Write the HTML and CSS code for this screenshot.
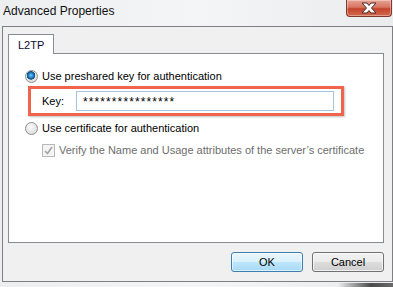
FILE: index.html
```html
<!DOCTYPE html>
<html lang="en">
<head>
  <meta charset="UTF-8">
  <title>Advanced Properties</title>
  <link rel="stylesheet" href="styles.css">
</head>
<body>
  <!-- Title bar -->
  <div class="titlebar">
    <span class="title">Advanced Properties</span>
    <button class="close-button" aria-label="Close">
      <svg width="20" height="12" viewBox="0 0 20 12">
        <path d="M3 1 L8 1 L10 3.5 L12 1 L17 1 L12.5 6 L17 11 L12 11 L10 8.5 L8 11 L3 11 L7.5 6 Z"
              fill="#ffffff" stroke="#4a2a26" stroke-width="1" stroke-linejoin="round"/>
      </svg>
    </button>
  </div>

  <div class="dialog">
    <!-- Tabs -->
    <div class="tabs">
      <div class="tab">L2TP</div>
      <div class="tab-fill"></div>
    </div>

    <div class="panel">
      <label class="option">
        <span class="radio checked"></span>
        <span>Use preshared key for authentication</span>
      </label>

      <div class="key-box">
        <span class="key-label">Key:</span>
        <div class="key-input">****************</div>
      </div>

      <label class="option second">
        <span class="radio"></span>
        <span>Use certificate for authentication</span>
      </label>

      <label class="option sub disabled">
        <span class="checkbox">
          <svg width="9" height="9" viewBox="0 0 9 9">
            <path d="M1 5 L3.5 7.5 L8 1" fill="none" stroke="#a4a4a4" stroke-width="1.6"/>
          </svg>
        </span>
        <span>Verify the Name and Usage attributes of the server&rsquo;s certificate</span>
      </label>
    </div>

    <!-- Buttons -->
    <div class="buttons">
      <button class="btn default">OK</button>
      <button class="btn">Cancel</button>
    </div>
  </div>

  <div class="bottom-strip"><div class="shadow"></div></div>
</body>
</html>
```

FILE: styles.css
```css
body {
  margin: 0;
  width: 393px;
  height: 287px;
  overflow: hidden;
  background: linear-gradient(to right, #eceef0, #f4f5f6 50%, #eaecee);
  font-family: 'Liberation Sans', Arial, sans-serif;
  font-size: 11px;
  color: #000;
}

/* Title bar */
.titlebar {
  height: 26px;
  display: flex;
  justify-content: space-between;
  align-items: flex-start;
}
.title {
  margin: 4px 0 0 3px;
  font-size: 12px;
  color: #111;
}
.close-button {
  width: 46px;
  height: 17px;
  margin-right: 1px;
  padding: 0;
  border: 1px solid #80362a;
  border-top: none;
  border-radius: 0 0 4px 4px;
  background: linear-gradient(#e9a293, #d77562 45%, #c4432c 55%, #d46a4f);
  box-shadow: inset 0 0 0 1px rgba(255,255,255,0.35);
  display: flex;
  align-items: center;
  justify-content: center;
}

/* Dialog frame */
.dialog {
  margin-left: 2px;
  width: 391px;
  height: 256px;
  border: 1px solid #7f7f83;
  background: #f0f0f0;
  padding: 7px 8px 0 5px;
  box-sizing: border-box;
  display: flex;
  flex-direction: column;
}

.tabs {
  display: flex;
  align-items: flex-end;
}
.tab {
  width: 46px;
  height: 20px;
  box-sizing: border-box;
  border: 1px solid #898c95;
  border-bottom: none;
  background: #fff;
  padding: 4px 0 0 9px;
  font-size: 11px;
  color: #0a0a30;
}
.tab-fill {
  flex: 1;
  border-bottom: 1px solid #898c95;
}

.panel {
  height: 189px;
  box-sizing: border-box;
  border: 1px solid #898c95;
  border-top: none;
  background: #fff;
  padding: 14px 0 0 16px;
  display: flex;
  flex-direction: column;
}

.option {
  display: flex;
  align-items: center;
  gap: 4px;
  height: 16px;
  white-space: nowrap;
}
.option.second {
  margin-top: 4px;
}
.option.sub {
  margin: 6px 0 0 17px;
  gap: 4px;
}
.option.disabled { color: #6d6d6d; }

.radio {
  width: 11px;
  height: 11px;
  border-radius: 50%;
  border: 1px solid #8e8f8f;
  background: radial-gradient(circle at 40% 35%, #fafafa, #d6d6d6);
  flex: none;
}
.radio.checked {
  background:
    radial-gradient(circle at 45% 40%, #7fd0f5 0, #2a8fd0 2px, #0e4a86 4px, transparent 4.5px),
    radial-gradient(circle at 40% 35%, #fafafa, #d6d6d6);
}

.checkbox {
  width: 11px;
  height: 11px;
  border: 1px solid #b8b8b8;
  background: #f4f4f4;
  display: flex;
  align-items: center;
  justify-content: center;
  flex: none;
}

/* Highlighted key field */
.key-box {
  margin: 2px 0 0 3px;
  width: 316px;
  height: 30px;
  box-sizing: border-box;
  border: 3px solid #f0644e;
  box-shadow: 1px 1px 2px rgba(0,0,0,0.25);
  display: flex;
  align-items: center;
  padding-left: 11px;
}
.key-label {
  width: 34px;
}
.key-input {
  width: 258px;
  height: 20px;
  box-sizing: border-box;
  border: 1px solid #a5c3dc;
  padding: 3px 0 0 6px;
  line-height: 14px;
  font-size: 12px;
  letter-spacing: 1.1px;
}

/* Bottom buttons */
.buttons {
  display: flex;
  justify-content: flex-end;
  gap: 9px;
  margin-top: 9px;
}
.btn {
  width: 72px;
  height: 20px;
  padding: 0;
  font-family: inherit;
  font-size: 11px;
  color: #000;
  border: 1px solid #707070;
  border-radius: 3px;
  background: linear-gradient(#f2f2f2, #ebebeb 50%, #dddddd 50%, #cfcfcf);
  box-shadow: inset 0 0 0 1px rgba(255,255,255,0.7);
}
.btn.default {
  border-color: #3c7fb1;
  background: linear-gradient(#eaf6fd, #d9f0fc 50%, #bee6fd 50%, #a7d9f5);
  box-shadow: inset 0 0 0 1px rgba(255,255,255,0.6);
}

.bottom-strip {
  height: 5px;
  display: flex;
  justify-content: flex-end;
}
.shadow {
  width: 55px;
  height: 4px;
  margin-top: 1px;
  background: linear-gradient(to right, rgba(40,40,40,0), #4a4a4a 60%, #6a6a6a);
}
```
